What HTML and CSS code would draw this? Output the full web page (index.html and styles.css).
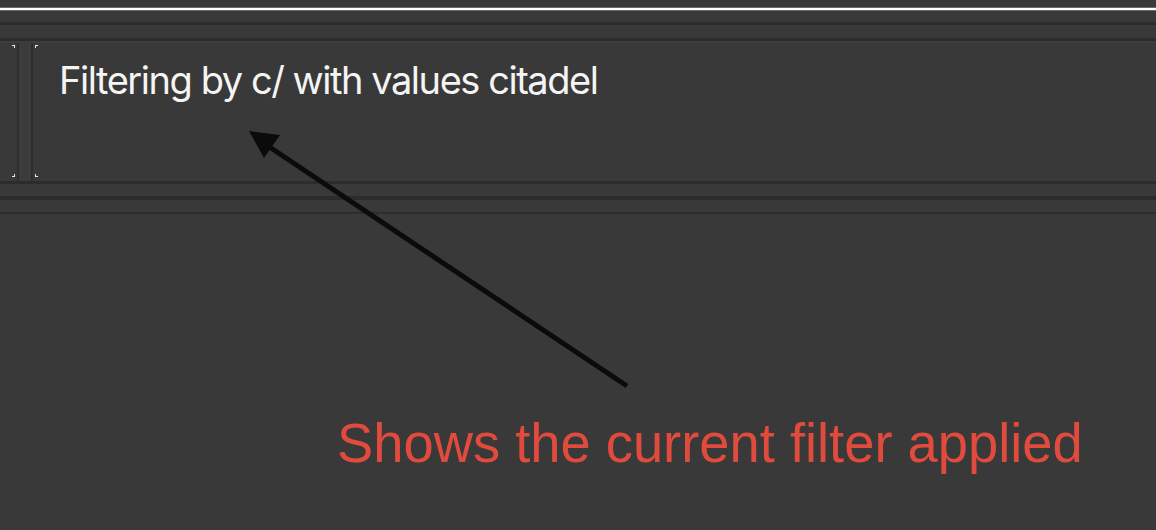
FILE: index.html
```html
<!DOCTYPE html>
<html>
<head>
<meta charset="utf-8">
<link rel="stylesheet" href="styles.css">
</head>
<body>
<div class="page">
  <div class="top-gap"></div>
  <div class="rule"></div>
  <div class="gap-a"></div>
  <div class="band"></div>
  <div class="gap-b"></div>
  <div class="band"></div>
  <div class="panels">
    <div class="panel panel-left"><span class="mark tr"></span><span class="mark br"></span></div>
    <div class="sep"></div>
    <div class="column"></div>
    <div class="sep"></div>
    <div class="panel panel-main">
      <span class="mark tl"></span><span class="mark bl"></span>
      <p class="result">Filtering by c/ with values citadel</p>
    </div>
  </div>
  <div class="band"></div>
  <div class="gap-c"></div>
  <div class="band band-4"></div>
  <div class="gap-c"></div>
  <div class="band band-2"></div>
  <div class="rest">
    <p class="caption">Shows the current filter applied</p>
  </div>
  <svg class="arrow" width="1156" height="530" viewBox="0 0 1156 530">
    <line x1="627" y1="386" x2="268" y2="146" stroke="#0b0b0b" stroke-width="5"/>
    <polygon points="249,131 280,135 264,158" fill="#0b0b0b"/>
  </svg>
</div>
</body>
</html>
```
FILE: styles.css
```css
html, body {
  margin: 0;
  padding: 0;
  background: #383938;
}
.page {
  position: relative;
  width: 1156px;
  height: 530px;
  display: flex;
  flex-direction: column;
  overflow: hidden;
  background: #383938;
}
.top-gap { height: 7px; }
.rule {
  height: 2px;
  background: #ffffff;
  border-top: 1px solid #6a6a6a;
  border-bottom: 1px solid #6a6a6a;
}
.gap-a { height: 11px; }
.gap-b { height: 13px; }
.gap-c { height: 12px; }
.band { height: 3px; background: #2b2c2b; flex: none; }
.band-4 { height: 4px; }
.band-2 { height: 2px; }
.panels {
  height: 138px;
  display: flex;
  border-top: 2px solid #3c3d3c;
  flex: none;
}
.panel {
  position: relative;
  background: #383938;
}
.panel-left { width: 17px; }
.panel-main { flex: 1; padding-left: 26px; }
.sep { width: 2px; background: #2d2e2d; }
.column { width: 12px; background: #3b3c3b; margin-top: -2px; }
.mark {
  position: absolute;
  width: 3px;
  height: 3px;
  border-color: #e8e8e8;
  border-style: solid;
  border-width: 0;
  box-sizing: border-box;
}
.mark.tr { top: 2px; right: 2px; border-top-width: 1px; border-right-width: 1px; }
.mark.br { bottom: 4px; right: 2px; border-bottom-width: 1px; border-right-width: 1px; }
.mark.tl { top: 2px; left: 2px; border-top-width: 1px; border-left-width: 1px; }
.mark.bl { bottom: 4px; left: 2px; border-bottom-width: 1px; border-left-width: 1px; }
.result {
  margin: 15px 0 0;
  font-family: Inter, "Noto Sans", sans-serif;
  font-size: 38px;
  letter-spacing: -1.45px;
  color: #f4f4f4;
  line-height: 44px;
}
.rest { flex: 1; position: relative; }
.caption {
  margin: 0;
  position: absolute;
  left: 337px;
  top: 197px;
  font-family: "Liberation Sans", Arial, sans-serif;
  font-size: 56px;
  line-height: 64px;
  color: #e14b3d;
  transform-origin: left top;
  transform: scaleX(0.97);
  white-space: nowrap;
}
.arrow {
  position: absolute;
  left: 0;
  top: 0;
  pointer-events: none;
}
```
